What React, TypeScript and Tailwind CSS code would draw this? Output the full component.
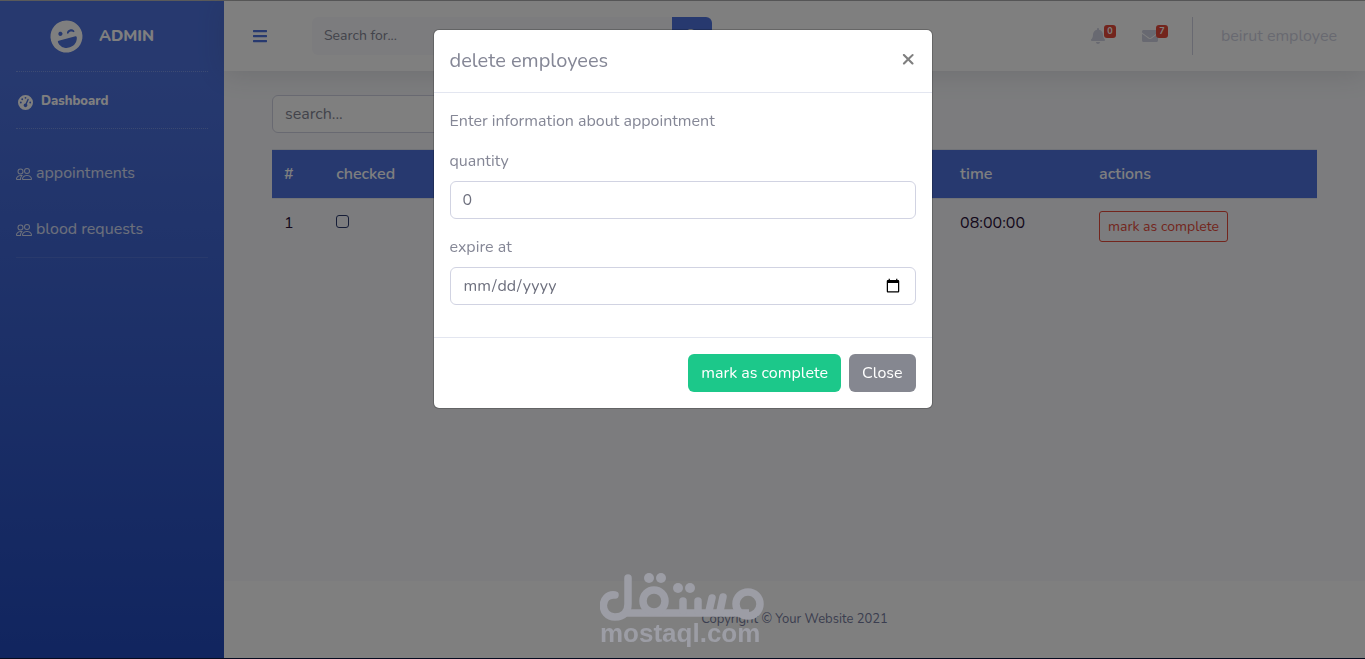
import type { ReactNode } from 'react';
import { FaBars, FaBell, FaEnvelope, FaLaughWink, FaSearch } from 'react-icons/fa';
import { FaGaugeHigh } from 'react-icons/fa6';
import { BsPeople } from 'react-icons/bs';

function Sidebar() {
  return (
    <aside className="w-56 shrink-0 bg-linear-to-b from-[#4e73df] from-10% to-[#224abe] px-4 text-white/80">
      <a href="#" className="flex h-[70px] items-center justify-center gap-4 pr-5 font-extrabold text-white">
        <FaLaughWink className="size-[33px] -rotate-15" />
        <span>ADMIN</span>
      </a>
      <hr className="border-dotted border-white/25" />
      <a href="#" className="flex h-14 items-center gap-2 pt-1 text-[13px] font-extrabold text-white">
        <FaGaugeHigh className="ml-0.5 size-[15px]" />
        <span>Dashboard</span>
      </a>
      <hr className="mb-4 border-dotted border-white/25" />
      <nav className="flex flex-col">
        <NavItem>appointments</NavItem>
        <NavItem>blood requests</NavItem>
      </nav>
      <hr className="border-white/10" />
    </aside>
  );
}

function NavItem({ children }: { children: ReactNode }) {
  return (
    <a href="#" className="flex h-14 items-center gap-1">
      <BsPeople className="mt-0.5 size-4" />
      <span>{children}</span>
    </a>
  );
}

function IconWithBadge({ label, count, children }: { label: string; count: number; children: ReactNode }) {
  return (
    <button type="button" aria-label={label} className="relative flex h-9 w-[52px] items-center justify-center text-[#d1d3e2]">
      {children}
      <span className="absolute top-[7px] left-8 flex h-[13px] w-3 items-center justify-center rounded-[3px] bg-[#e74a3b] text-[9px] font-bold text-white">
        {count}
      </span>
    </button>
  );
}

function Topbar() {
  return (
    <header className="flex h-[70px] items-center bg-white px-7 shadow-[0_2px_28px_rgba(58,59,69,0.15)]">
      <button type="button" aria-label="Toggle sidebar" className="mr-11 text-[#4e73df]">
        <FaBars className="size-4" />
      </button>
      <form className="flex h-[38px] w-[400px]">
        <input
          type="text"
          aria-label="Search for"
          placeholder="Search for..."
          className="min-w-0 flex-1 rounded-l-md bg-[#f8f9fc] px-3 text-sm placeholder:text-[#858796]"
        />
        <button type="button" aria-label="Search" className="flex w-10 items-center justify-center rounded-r-md bg-[#4e73df] text-white">
          <FaSearch className="size-[14px]" />
        </button>
      </form>
      <div className="ml-auto flex items-center">
        <IconWithBadge label="Alerts" count={0}>
          <FaBell className="size-4" />
        </IconWithBadge>
        <IconWithBadge label="Messages" count={7}>
          <FaEnvelope className="size-4" />
        </IconWithBadge>
        <div className="mr-7 ml-4 h-[38px] border-l border-[#d1d3e2]" />
        <span className="text-[#d1d3e2]">beirut employee</span>
      </div>
    </header>
  );
}

function Appointments() {
  return (
    <main className="flex-1 px-12 pt-6">
      <input
        type="text"
        aria-label="search"
        placeholder="search..."
        className="mb-4 block h-[38px] w-1/2 rounded-md border border-[#d1d3e2] bg-white px-3 placeholder:text-[#858796]"
      />
      <table className="w-full table-fixed border-separate border-spacing-0 border-t border-[#e3e6f0] text-left">
        <thead className="bg-[#4e73df] text-white">
          <tr>
            <th className="w-[5%] p-3 font-semibold">#</th>
            <th className="w-[59.7%] p-3 font-semibold">checked</th>
            <th className="w-[13.3%] p-3 font-semibold">time</th>
            <th className="w-[22%] p-3 font-semibold">actions</th>
          </tr>
        </thead>
        <tbody className="text-[#2a1038]">
          <tr className="align-top">
            <td className="border-t border-[#e3e6f0] p-3">1</td>
            <td className="border-t border-[#e3e6f0] p-3">
              <input type="checkbox" aria-label="checked" className="mt-1 block size-[13px] appearance-none rounded-[3px] border border-[#2c3a6e]" />
            </td>
            <td className="border-t border-[#e3e6f0] p-3">08:00:00</td>
            <td className="border-t border-[#e3e6f0] p-3">
              <button type="button" className="h-[31px] rounded-[3px] border border-[#e74a3b] px-2 text-sm text-[#e74a3b]">
                mark as complete
              </button>
            </td>
          </tr>
        </tbody>
      </table>
    </main>
  );
}

function Modal() {
  return (
    <div className="fixed inset-0 flex items-start justify-center bg-black/50 pt-[29px]">
      <div role="dialog" aria-modal="true" aria-labelledby="modal-title" className="w-[500px] rounded-md border border-black/20 bg-white bg-clip-padding">
        <div className="flex items-start justify-between border-b border-[#e3e6f0] p-4">
          <h5 id="modal-title" className="text-xl leading-[30px]">delete employees</h5>
          <button type="button" aria-label="Close dialog" className="text-2xl leading-6 font-bold text-[#7f7f7f]">×</button>
        </div>
        <form className="flex flex-col gap-4 p-4 pb-8">
          <p>Enter information about appointment</p>
          <div className="flex flex-col gap-2">
            <label htmlFor="quantity">quantity</label>
            <input id="quantity" type="text" defaultValue="0" className="h-[38px] rounded-md border border-[#d1d3e2] px-3 text-[#6e707e]" />
          </div>
          <div className="flex flex-col gap-2">
            <label htmlFor="expire">expire at</label>
            <input id="expire" type="date" className="h-[38px] rounded-md border border-[#d1d3e2] px-3 text-[#6e707e]" />
          </div>
        </form>
        <div className="flex justify-end gap-2 border-t border-[#e3e6f0] p-4">
          <button type="button" className="h-[38px] rounded-md bg-[#1cc88a] px-[13px] text-white">mark as complete</button>
          <button type="button" className="h-[38px] rounded-md bg-[#858790] px-[13px] text-white">Close</button>
        </div>
      </div>
    </div>
  );
}

function Watermark() {
  return (
    <div className="pointer-events-none fixed bottom-[15px] left-[600px] flex flex-col text-[#9c9da5]">
      <svg viewBox="0 0 164 49" className="h-[49px] w-[164px]" fill="none" stroke="currentColor" strokeWidth="7.5">
        <path strokeLinecap="round" d="M15 22C0 20-1 44 15 44C24 44 28 39 28 31V5" />
        <path d="M24 40H149" />
        <circle cx="54" cy="28" r="11" />
        <circle cx="148" cy="31" r="12" />
        <path strokeLinecap="round" d="M83 38V28M98 38V28M109 38L112 25M120 38L123 24" />
        <g fill="currentColor" stroke="none">
          <circle cx="49" cy="5" r="5" />
          <circle cx="61" cy="5" r="5" />
          <circle cx="78" cy="15" r="5" />
          <circle cx="90" cy="15" r="5" />
        </g>
      </svg>
      <span className="font-['Liberation_Sans',sans-serif] text-[26px] leading-[22px] font-bold">mostaql.com</span>
    </div>
  );
}

export default function App() {
  return (
    <div className="flex min-h-screen border-t border-b border-t-[#b4b4b4] border-b-[#0b1640] bg-[#f8f9fc] font-[Nunito,Lato,sans-serif] text-base text-[#858796]">
      <Sidebar />
      <div className="flex min-w-0 flex-1 flex-col">
        <Topbar />
        <Appointments />
        <footer className="bg-white py-8 text-center text-[13px] leading-[13px] text-[#777da0]">Copyright © Your Website 2021</footer>
      </div>
      <Modal />
      <Watermark />
    </div>
  );
}
